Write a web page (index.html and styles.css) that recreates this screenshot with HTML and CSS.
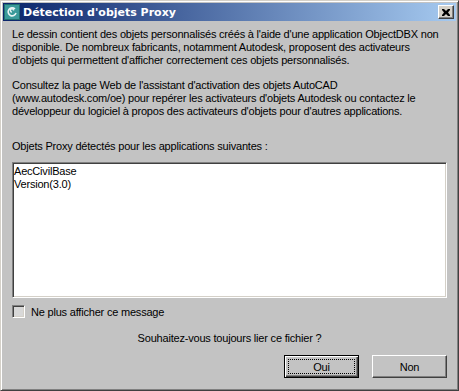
FILE: index.html
```html
<!DOCTYPE html>
<html lang="fr">
<head>
    <meta charset="UTF-8">
    <title>Détection d'objets Proxy</title>
    <link rel="stylesheet" href="styles.css">
</head>
<body>
    <div class="window">
        <div class="titlebar">
            <svg class="appicon" width="16" height="16" viewBox="0 0 16 16">
                <rect x="0" y="0" width="16" height="16" fill="#1f6f6f"/>
                <rect x="1" y="1" width="14" height="14" fill="#3a9a9a"/>
                <path d="M11 5 A4 4 0 1 0 12 9" fill="none" stroke="#e8f4f4" stroke-width="1.6"/>
                <path d="M8 8 A1.6 1.6 0 1 1 9.6 6.4" fill="none" stroke="#e8f4f4" stroke-width="1.4"/>
            </svg>
            <span class="title">Détection d'objets Proxy</span>
            <div class="closebtn">
                <svg width="8" height="7" viewBox="0 0 8 7">
                    <path d="M0 0h2l2 2 2-2h2v1l-2 2.5 2 2.5v1h-2l-2-2-2 2h-2v-1l2-2.5-2-2.5z" fill="#000"/>
                </svg>
            </div>
        </div>

        <div class="content">
            <p>Le dessin contient des objets personnalisés créés à l'aide d'une application ObjectDBX non<br>
               disponible. De nombreux fabricants, notamment Autodesk, proposent des activateurs<br>
               d'objets qui permettent d'afficher correctement ces objets personnalisés.</p>
            <p>Consultez la page Web de l'assistant d'activation des objets AutoCAD<br>
               (www.autodesk.com/oe) pour repérer les activateurs d'objets Autodesk ou contactez le<br>
               développeur du logiciel à propos des activateurs d'objets pour d'autres applications.</p>

            <p class="label">Objets Proxy détectés pour les applications suivantes :</p>
            <div class="listbox">
                <div>AecCivilBase</div>
                <div>Version(3.0)</div>
            </div>

            <label class="check">
                <span class="box"></span>
                Ne plus afficher ce message
            </label>

            <p class="question">Souhaitez-vous toujours lier ce fichier ?</p>

            <div class="buttons">
                <button class="btn default"><span>Oui</span></button>
                <button class="btn"><span>Non</span></button>
            </div>
        </div>
    </div>
</body>
</html>
```

FILE: styles.css
```css
* {
    margin: 0;
    padding: 0;
    box-sizing: border-box;
}

body {
    background: #c0c0c0;
    font-family: 'Liberation Sans', Arial, sans-serif;
    font-size: 11px;
    color: #000;
}

.window {
    width: 459px;
    height: 391px;
    background: #c3c3c3;
    border: 1px solid;
    border-color: #d4d0c8 #404040 #404040 #d4d0c8;
    box-shadow: inset 1px 1px 0 #fff, inset -1px -1px 0 #808080;
    padding: 2px;
    display: flex;
    flex-direction: column;
}

.titlebar {
    height: 18px;
    display: flex;
    align-items: center;
    padding: 0 2px 0 1px;
    background: linear-gradient(to right, #0a246a, #a6caf0);
    color: #fff;
}

.appicon {
    flex: none;
    margin-right: 3px;
}

.title {
    flex: 1;
    font-family: 'DejaVu Sans', sans-serif;
    font-weight: bold;
    font-size: 11px;
}

.closebtn {
    width: 16px;
    height: 14px;
    background: #d4d0c8;
    border: 1px solid;
    border-color: #fff #404040 #404040 #fff;
    box-shadow: inset -1px -1px 0 #808080;
    display: flex;
    align-items: center;
    justify-content: center;
}

.content {
    flex: 1;
    padding: 7px 9px 0 9px;
    display: flex;
    flex-direction: column;
    letter-spacing: -0.2px;
}

p {
    line-height: 13px;
    margin-bottom: 12px;
}

.label {
    margin-top: 10px;
    margin-bottom: 9px;
}

.listbox {
    height: 136px;
    background: #fff;
    border: 1px solid;
    border-color: #808080 #fff #fff #808080;
    box-shadow: inset 1px 1px 0 #404040, inset -1px -1px 0 #d4d0c8;
    padding: 2px 1px;
    line-height: 13px;
}

.check {
    display: flex;
    align-items: center;
    margin-top: 7px;
    gap: 6px;
}

.box {
    width: 13px;
    height: 13px;
    background: #d8d8d8;
    border: 1px solid;
    border-color: #808080 #fff #fff #808080;
    box-shadow: inset 1px 1px 0 #404040, inset -1px -1px 0 #d4d0c8;
}

.question {
    text-align: center;
    margin-top: 14px;
    margin-bottom: 0;
}

.buttons {
    display: flex;
    justify-content: flex-end;
    gap: 13px;
    margin-top: 10px;
}

.btn {
    width: 75px;
    height: 23px;
    font-family: inherit;
    font-size: 11px;
    letter-spacing: -0.2px;
    background: #c3c3c3;
    border: 1px solid;
    border-color: #fff #404040 #404040 #fff;
    box-shadow: inset -1px -1px 0 #808080;
    display: flex;
    align-items: center;
    justify-content: center;
    padding: 3px;
}

.btn span {
    flex: 1;
    align-self: stretch;
    display: flex;
    align-items: center;
    justify-content: center;
    border: 1px dotted transparent;
}

.btn.default {
    border: 1px solid #000;
    box-shadow: inset 1px 1px 0 #fff, inset -1px -1px 0 #404040, inset -2px -2px 0 #808080;
}

.btn.default span {
    border-color: #000;
}
```
